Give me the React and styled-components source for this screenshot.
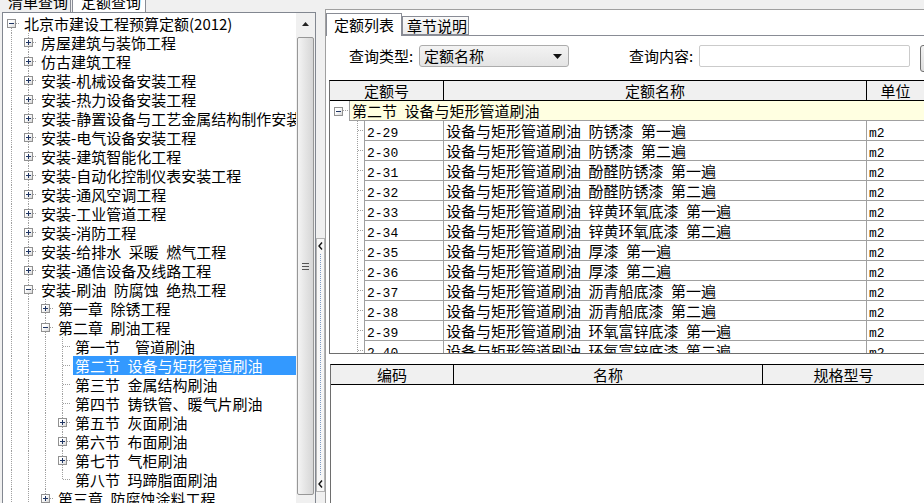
import React from 'react'
import styled, { createGlobalStyle } from 'styled-components'

const DOT = '#a0a0a0'
const vDots = (x, y, h) =>
  `repeating-linear-gradient(to bottom, ${DOT} 0 1px, transparent 1px 2px) ${x}px ${y}px / 1px ${h} no-repeat`
const hDots = (x, y, w) =>
  `repeating-linear-gradient(to right, ${DOT} 0 1px, transparent 1px 2px) ${x}px ${y}px / ${w}px 1px no-repeat`

const GlobalStyle = createGlobalStyle`
  html, body {
    margin: 0;
    padding: 0;
    background: #f0f0f0;
  }
  body {
    font-family: "Noto Sans CJK SC", "Noto Sans", sans-serif;
    font-size: 15px;
    color: #000;
  }
  * {
    box-sizing: border-box;
  }
`

const Window = styled.div`
  display: flex;
  width: 924px;
  height: 503px;
  overflow: hidden;
  background: #f0f0f0;
`

/* left side: book tree */

const LeftColumn = styled.div`
  display: flex;
  flex-direction: column;
  width: 316px;
  flex-shrink: 0;
`

const TopTabs = styled.div`
  display: flex;
  align-items: flex-end;
  height: 12px;
  overflow: hidden;
`

const TopTab = styled.div`
  flex-shrink: 0;
  width: ${p => p.$w}px;
  height: 21px;
  margin-left: ${p => p.$ml || 0}px;
  padding-left: 8px;
  border: 1px solid #898c95;
  border-bottom: none;
  background: ${p => (p.$active ? '#fff' : '#f0f0f0')};
  line-height: 20px;
  white-space: nowrap;
`

const TreePanel = styled.div`
  flex: 1;
  display: flex;
  min-height: 0;
  margin-left: 2px;
  border: 1px solid #828790;
  border-bottom: none;
  background: #fff;
`

const Tree = styled.div`
  flex: 1;
  min-width: 0;
  overflow: hidden;
  padding-top: 1px;
`

const TreeRow = styled.div`
  display: flex;
  height: 19px;
  white-space: nowrap;
`

const Rail = styled.span`
  flex-shrink: 0;
  width: 17px;
  background: ${p => (p.$on ? vDots(8, 0, '100%') : 'none')};
`

const Joint = styled.span`
  flex-shrink: 0;
  display: flex;
  align-items: center;
  width: 17px;
  padding-left: 4px;
  background: ${p =>
    [p.$up && vDots(8, 0, '10px'), p.$down && vDots(8, 10, '9px'), hDots(9, 9, 8)]
      .filter(Boolean)
      .join(', ')};
`

const Expander = styled.span`
  flex-shrink: 0;
  width: 9px;
  height: 9px;
  border: 1px solid #919191;
  background: linear-gradient(#1f3563, #1f3563) center / 5px 1px no-repeat,
    ${p => (p.$open ? '' : 'linear-gradient(#1f3563, #1f3563) center / 1px 5px no-repeat,')}
    linear-gradient(135deg, #fff 35%, #d8d8d8);
`

const NodeLabel = styled.span`
  margin-left: 2px;
  padding-left: 2px;
  line-height: 19px;
  ${p => p.$selected && 'flex: 1; background: #3399ff; color: #fff;'}
`

const ScrollBar = styled.div`
  display: flex;
  flex-direction: column;
  align-items: center;
  width: 19px;
  flex-shrink: 0;
  background: #f0f0f0;
`

const ScrollButton = styled.div`
  display: flex;
  align-items: center;
  justify-content: center;
  width: 100%;
  height: 21px;
  flex-shrink: 0;
`

const Thumb = styled.div`
  display: flex;
  align-items: center;
  justify-content: center;
  width: 17px;
  height: 458px;
  flex-shrink: 0;
  margin-top: 3px;
  border: 1px solid #979797;
  border-radius: 2px;
  background: linear-gradient(to right, #f4f4f4, #e6e6e6 45%, #d6d6d6);
`

const Grip = styled.span`
  width: 7px;
  height: 7px;
  background: linear-gradient(#555, #555) 0 0 / 7px 1px no-repeat,
    linear-gradient(#555, #555) 0 3px / 7px 1px no-repeat,
    linear-gradient(#555, #555) 0 6px / 7px 1px no-repeat;
`

/* splitter */

const Splitter = styled.div`
  display: flex;
  flex-direction: column;
  width: 9px;
  flex-shrink: 0;
  padding-top: 238px;
`

const SplitHandle = styled.div`
  display: flex;
  flex-direction: column;
  align-items: center;
  height: 254px;
  padding: 3px 0;
  border: 1px solid #b4b4b4;
  background: #f7f7f7;
`

const SplitDots = styled.span`
  flex: 1;
  width: 1px;
  margin: 4px 0;
  background: repeating-linear-gradient(to bottom, #7f9cc6 0 1px, transparent 1px 2px);
`

/* right side */

const RightPanel = styled.div`
  flex: 1;
  min-width: 0;
  display: flex;
  flex-direction: column;
  margin-top: 9px;
  border-top: 1px solid #a0a0a0;
  border-left: 1px solid #a0a0a0;
  background: #fff;
  overflow: hidden;
`

const TabBar = styled.div`
  display: flex;
  align-items: flex-end;
  height: 26px;
  flex-shrink: 0;
  border-bottom: 1px solid #898c95;
`

const Tab = styled.div`
  flex-shrink: 0;
  width: ${p => p.$w}px;
  height: ${p => (p.$active ? 23 : 19)}px;
  margin-bottom: ${p => (p.$active ? -1 : 0)}px;
  padding-left: ${p => (p.$active ? 7 : 4)}px;
  border: 1px solid #898c95;
  border-bottom: ${p => (p.$active ? 'none' : '1px solid #898c95')};
  background: ${p => (p.$active ? '#fff' : 'linear-gradient(#fafafa, #ececec)')};
  line-height: ${p => (p.$active ? 21 : 17)}px;
  white-space: nowrap;
`

const QueryBar = styled.div`
  display: flex;
  align-items: flex-start;
  height: 44px;
  flex-shrink: 0;
  padding: 9px 0 0 23px;
  white-space: nowrap;
`

const FieldLabel = styled.span`
  flex-shrink: 0;
  width: 70px;
  margin-left: ${p => p.$ml || 0}px;
  line-height: 22px;
`

const Select = styled.div`
  display: flex;
  align-items: center;
  justify-content: space-between;
  flex-shrink: 0;
  width: 150px;
  height: 22px;
  padding: 0 6px 0 4px;
  border: 1px solid #acacac;
  border-radius: 3px;
  background: linear-gradient(#f3f3f3, #e4e4e4);
  line-height: 20px;
`

const TextInput = styled.div`
  flex-shrink: 0;
  width: 211px;
  height: 22px;
  border: 1px solid #cbcbcb;
  border-radius: 2px;
  background: #fff;
`

const QueryButton = styled.div`
  flex-shrink: 0;
  width: 60px;
  height: 27px;
  margin-left: 10px;
  border: 1px solid #707070;
  border-radius: 3px;
  background: linear-gradient(#f2f2f2, #dddddd);
`

const Grid = styled.div`
  display: flex;
  flex-direction: column;
  flex-shrink: 0;
  height: 274px;
  margin-left: 3px;
  border: 1px solid #6e6e6e;
  border-top-color: #000;
  border-right: none;
  overflow: hidden;
`

const LowerGrid = styled.div`
  display: flex;
  flex-direction: column;
  flex: 1;
  margin: 10px 0 0 4px;
  border-left: 1px solid #6e6e6e;
  border-top: 1px solid #000;
`

const HeadRow = styled.div`
  display: flex;
  flex-shrink: 0;
  height: 20px;
  border-bottom: 1px solid #000;
  background: #f0f0f0;
`

const HeadCell = styled.div`
  flex: ${p => (p.$w ? `0 0 ${p.$w}px` : 1)};
  border-right: ${p => (p.$w ? '1px solid #000' : 'none')};
  text-align: center;
  line-height: 19px;
  white-space: nowrap;
`

const GridRow = styled.div`
  display: flex;
  flex-shrink: 0;
  height: 20px;
  white-space: nowrap;
`

const GroupGutter = styled.span`
  display: flex;
  align-items: center;
  flex: 0 0 19px;
  padding-left: 4px;
  background: ${hDots(13, 9, 6)};
`

const GroupCell = styled.span`
  flex: 1;
  padding-left: 2px;
  border-left: 1px solid #a0a0a0;
  border-bottom: 1px solid #a0a0a0;
  background: #ffffe1;
  line-height: 19px;
`

const LeafGutter = styled.span`
  flex: 0 0 34px;
  background: ${vDots(27, 0, '100%')}, ${hDots(28, 9, 6)};
`

const Cell = styled.span`
  flex: ${p => (p.$w ? `0 0 ${p.$w}px` : 1)};
  padding-left: 2px;
  border-left: 1px solid #a0a0a0;
  border-bottom: 1px solid #a0a0a0;
  line-height: 19px;
  overflow: hidden;
`

const Mono = styled.span`
  font-family: "Liberation Mono", "DejaVu Sans Mono", monospace;
  font-size: 13px;
`

/* data */

const TREE = {
  label: '北京市建设工程预算定额(2012)',
  open: true,
  children: [
    { label: '房屋建筑与装饰工程', closed: true },
    { label: '仿古建筑工程', closed: true },
    { label: '安装-机械设备安装工程', closed: true },
    { label: '安装-热力设备安装工程', closed: true },
    { label: '安装-静置设备与工艺金属结构制作安装工程', closed: true },
    { label: '安装-电气设备安装工程', closed: true },
    { label: '安装-建筑智能化工程', closed: true },
    { label: '安装-自动化控制仪表安装工程', closed: true },
    { label: '安装-通风空调工程', closed: true },
    { label: '安装-工业管道工程', closed: true },
    { label: '安装-消防工程', closed: true },
    { label: '安装-给排水 采暖 燃气工程', closed: true },
    { label: '安装-通信设备及线路工程', closed: true },
    {
      label: '安装-刷油 防腐蚀 绝热工程',
      open: true,
      more: true,
      children: [
        { label: '第一章 除锈工程', closed: true },
        {
          label: '第二章 刷油工程',
          open: true,
          children: [
            { label: '第一节\u3000管道刷油' },
            { label: '第二节 设备与矩形管道刷油', selected: true },
            { label: '第三节 金属结构刷油' },
            { label: '第四节 铸铁管、暖气片刷油' },
            { label: '第五节 灰面刷油', closed: true },
            { label: '第六节 布面刷油', closed: true },
            { label: '第七节 气柜刷油', closed: true },
            { label: '第八节 玛蹄脂面刷油' },
          ],
        },
        { label: '第三章 防腐蚀涂料工程', closed: true, more: true },
      ],
    },
  ],
}

function flatten(node, level, rails, hasNext, out) {
  out.push({ ...node, level, rails, hasNext, first: out.length === 0 })
  if (node.open) {
    node.children.forEach((child, i) =>
      flatten(child, level + 1, [...rails, hasNext], i < node.children.length - 1 || !!child.more, out)
    )
  }
  return out
}

const treeRows = flatten(TREE, 0, [], true, [])

const PREFIX = '设备与矩形管道刷油'
const QUOTAS = [
  ['2-29', '防锈漆 第一遍'],
  ['2-30', '防锈漆 第二遍'],
  ['2-31', '酚醛防锈漆 第一遍'],
  ['2-32', '酚醛防锈漆 第二遍'],
  ['2-33', '锌黄环氧底漆 第一遍'],
  ['2-34', '锌黄环氧底漆 第二遍'],
  ['2-35', '厚漆 第一遍'],
  ['2-36', '厚漆 第二遍'],
  ['2-37', '沥青船底漆 第一遍'],
  ['2-38', '沥青船底漆 第二遍'],
  ['2-39', '环氧富锌底漆 第一遍'],
  ['2-40', '环氧富锌底漆 第二遍'],
]

// SimSun-like half-width gaps
const gap = s => s.replace(/ /g, '\u2002')

const UpArrow = () => (
  <svg width="7" height="4" viewBox="0 0 7 4">
    <path d="M0 4 L3.5 0 L7 4 Z" fill="#222" />
  </svg>
)

const LeftChevron = () => (
  <svg width="5" height="8" viewBox="0 0 5 8">
    <path d="M4 0.5 L1 4 L4 7.5" fill="none" stroke="#111" strokeWidth="1.4" />
  </svg>
)

const Caret = () => (
  <svg width="9" height="5" viewBox="0 0 9 5">
    <path d="M0 0 L9 0 L4.5 5 Z" fill="#111" />
  </svg>
)

function BookTree() {
  return (
    <Tree>
      {treeRows.map((row, i) => (
        <TreeRow key={i}>
          {row.rails.map((on, j) => (
            <Rail key={j} $on={on} />
          ))}
          <Joint $up={!row.first} $down={row.hasNext}>
            {(row.open || row.closed) && <Expander $open={row.open} />}
          </Joint>
          <NodeLabel $selected={row.selected}>{gap(row.label)}</NodeLabel>
        </TreeRow>
      ))}
    </Tree>
  )
}

function QuotaGrid() {
  return (
    <Grid>
      <HeadRow>
        <HeadCell $w={114}>定额号</HeadCell>
        <HeadCell $w={423}>定额名称</HeadCell>
        <HeadCell>单位</HeadCell>
      </HeadRow>
      <GridRow>
        <GroupGutter>
          <Expander $open />
        </GroupGutter>
        <GroupCell>{gap('第二节 设备与矩形管道刷油')}</GroupCell>
      </GridRow>
      {QUOTAS.map(([code, name]) => (
        <GridRow key={code}>
          <LeafGutter />
          <Cell $w={79}>
            <Mono>{code}</Mono>
          </Cell>
          <Cell $w={423}>{gap(`${PREFIX} ${name}`)}</Cell>
          <Cell>
            <Mono>m2</Mono>
          </Cell>
        </GridRow>
      ))}
    </Grid>
  )
}

export default function App() {
  return (
    <>
      <GlobalStyle />
      <Window>
        <LeftColumn>
          <TopTabs>
            <TopTab $w={72} $ml={-1}>清单查询</TopTab>
            <TopTab $w={74} $ml={1} $active>定额查询</TopTab>
          </TopTabs>
          <TreePanel>
            <BookTree />
            <ScrollBar>
              <ScrollButton>
                <UpArrow />
              </ScrollButton>
              <Thumb>
                <Grip />
              </Thumb>
            </ScrollBar>
          </TreePanel>
        </LeftColumn>

        <Splitter>
          <SplitHandle>
            <LeftChevron />
            <SplitDots />
            <LeftChevron />
          </SplitHandle>
        </Splitter>

        <RightPanel>
          <TabBar>
            <Tab $w={76} $active>定额列表</Tab>
            <Tab $w={67}>章节说明</Tab>
          </TabBar>
          <QueryBar>
            <FieldLabel>查询类型:</FieldLabel>
            <Select>
              <span>定额名称</span>
              <Caret />
            </Select>
            <FieldLabel $ml={60}>查询内容:</FieldLabel>
            <TextInput />
            <QueryButton />
          </QueryBar>
          <QuotaGrid />
          <LowerGrid>
            <HeadRow>
              <HeadCell $w={123}>编码</HeadCell>
              <HeadCell $w={309}>名称</HeadCell>
              <HeadCell>规格型号</HeadCell>
            </HeadRow>
          </LowerGrid>
        </RightPanel>
      </Window>
    </>
  )
}
